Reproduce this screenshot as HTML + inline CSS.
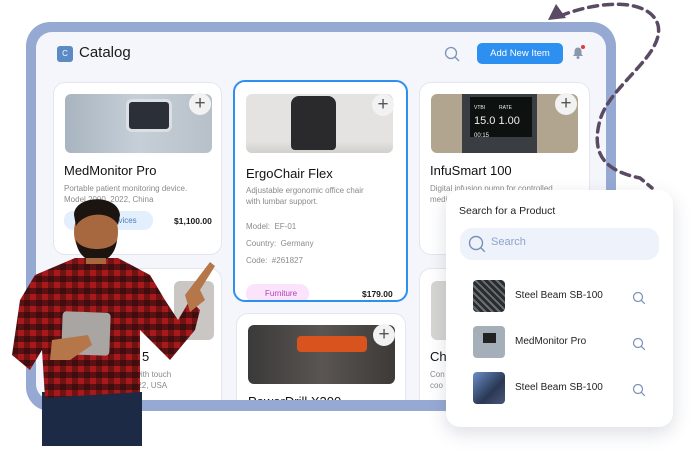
<!DOCTYPE html>
<html><head><style>
*{box-sizing:border-box;margin:0;padding:0}
body{width:699px;height:464px;background:#fff;position:relative;overflow:hidden;font-family:"Liberation Sans",sans-serif;color:#1a1a1a}
.abs{position:absolute}
.frame{left:26px;top:22px;width:590px;height:389px;background:#96a9d3;border-radius:24px}
.inner{left:36px;top:32px;width:570px;height:368px;background:#f4f6fb;border-radius:16px;overflow:hidden}
.card{position:absolute;background:#fff;border:1px solid #e3e6ee;border-radius:12px;overflow:hidden}
.img{position:absolute;border-radius:6px}
.plus{position:absolute;width:22px;height:22px;border-radius:50%;background:#f2f2f2;color:#555;font-size:19px;line-height:21px;text-align:center}
.t{position:absolute;font-size:13px;color:#111}
.d{position:absolute;font-size:8px;color:#8a8a8a;line-height:11px}
.sr{position:absolute;font-size:10px;color:#222}
</style></head><body>
<div class="abs frame"></div>
<div class="abs inner">
  <div class="abs" style="left:21px;top:14px;width:16px;height:16px;background:#5b8ac4;border-radius:3px;color:#fff;font-size:8px;text-align:center;line-height:16px">C</div>
  <div class="abs" style="left:43px;top:12px;font-size:15px">Catalog</div>
  <svg class="abs" style="left:408px;top:14px" width="16" height="16" viewBox="0 0 16 16"><circle cx="7" cy="7" r="5.5" fill="none" stroke="#7e93b8" stroke-width="1.3"/><path d="M11 11l4 4" stroke="#7e93b8" stroke-width="1.3"/></svg>
  <div class="abs" style="left:441px;top:11px;width:86px;height:21px;background:#2d8ff0;border-radius:5px;color:#fff;font-size:9.5px;text-align:center;line-height:21px">Add New Item</div>
  <svg class="abs" style="left:534px;top:12px" width="16" height="16" viewBox="0 0 16 16"><path d="M3 12h10l-1.5-2V7a3.5 3.5 0 0 0-7 0v3z" fill="#8b97ad"/><circle cx="8" cy="13.5" r="1.5" fill="#8b97ad"/><circle cx="13" cy="3" r="2" fill="#e53935"/></svg>

  <div class="card" style="left:17px;top:50px;width:169px;height:173px">
    <div class="img" style="left:11px;top:11px;width:147px;height:59px;background:linear-gradient(90deg,#a8b4bf,#c6cfd8 50%,#b7c0c8)"></div>
    <div class="img" style="left:72px;top:16px;width:46px;height:33px;background:#2b2f38;border:3px solid #dcdfe3"></div>
    <div class="plus" style="left:135px;top:10px">+</div>
    <div class="t" style="left:10px;top:80px">MedMonitor Pro</div>
    <div class="d" style="left:10px;top:100px">Portable patient monitoring device.<br>Model 2000, 2022, China</div>
    <div class="abs" style="left:10px;top:128px;width:89px;height:19px;background:#e3effd;border-radius:9px;color:#4a7ec0;font-size:8px;line-height:19px;padding-left:50px">evices</div>
    <div class="abs" style="left:120px;top:133px;font-size:8.5px;font-weight:bold">$1,100.00</div>
  </div>
  <div class="card" style="left:197px;top:48px;width:175px;height:222px;border:2px solid #2d8ff0">
    <div class="img" style="left:11px;top:12px;width:147px;height:59px;background:linear-gradient(180deg,#e4e3e1 80%,#d0cfcc)"></div>
    <div class="abs" style="left:56px;top:14px;width:45px;height:54px;background:#2a2a2c;border-radius:8px 8px 4px 4px"></div>
    <div class="plus" style="left:137px;top:12px">+</div>
    <div class="t" style="left:11px;top:84px">ErgoChair Flex</div>
    <div class="d" style="left:11px;top:103px">Adjustable ergonomic office chair<br>with lumbar support.</div>
    <div class="d" style="left:11px;top:139px">Model:&nbsp; EF-01</div>
    <div class="d" style="left:11px;top:156px">Country:&nbsp; Germany</div>
    <div class="d" style="left:11px;top:173px">Code:&nbsp; #261827</div>
    <div class="abs" style="left:11px;top:202px;width:63px;height:19px;background:#fbe3fb;border-radius:9px;color:#b040b0;font-size:8px;line-height:19px;padding-left:19px">Furniture</div>
    <div class="abs" style="left:127px;top:207px;font-size:8.5px;font-weight:bold">$179.00</div>
  </div>
  <div class="card" style="left:383px;top:50px;width:171px;height:173px">
    <div class="img" style="left:11px;top:11px;width:147px;height:59px;background:#b2a590"></div>
    <div class="abs" style="left:42px;top:11px;width:75px;height:59px;background:#3a3e42"></div>
    <div class="abs" style="left:50px;top:14px;width:62px;height:40px;background:#0d1210;color:#eee;font-size:11px;line-height:13px;padding:3px 4px"><span style="font-size:5px">VTBI&nbsp;&nbsp;&nbsp;&nbsp;&nbsp;&nbsp;&nbsp;&nbsp;&nbsp;&nbsp;RATE</span><br>15.0 1.00<br><span style="font-size:6px">00:15</span></div>
    <div class="plus" style="left:135px;top:10px">+</div>
    <div class="t" style="left:10px;top:80px">InfuSmart 100</div>
    <div class="d" style="left:10px;top:100px">Digital infusion pump for controlled<br>medication</div>
  </div>
  <div class="card" style="left:17px;top:236px;width:169px;height:150px">
    <div class="img" style="left:120px;top:12px;width:40px;height:59px;background:#c9c6c4"></div>
    <div class="t" style="left:88px;top:80px">5</div>
    <div class="d" style="left:70px;top:100px">ne with touch<br>, 2022, USA</div>
  </div>
  <div class="card" style="left:200px;top:281px;width:170px;height:100px">
    <div class="img" style="left:11px;top:11px;width:147px;height:59px;background:linear-gradient(90deg,#3a3a3a,#5a5552 50%,#3d3a38)"></div>
    <div class="abs" style="left:60px;top:22px;width:70px;height:16px;background:#d9531e;border-radius:4px"></div>
    <div class="plus" style="left:136px;top:10px">+</div>
    <div class="t" style="left:11px;top:80px">PowerDrill X200</div>
  </div>
  <div class="card" style="left:383px;top:236px;width:171px;height:150px">
    <div class="img" style="left:11px;top:12px;width:147px;height:59px;background:#d6d5d3"></div>
    <div class="t" style="left:10px;top:80px">Ch</div>
    <div class="d" style="left:10px;top:100px">Con<br>coo</div>
  </div>
</div>

<svg class="abs" style="left:0;top:0" width="699" height="464" viewBox="0 0 699 464">
  <path d="M560 16 C600 0 650 -2 658 25 C665 55 610 85 600 120 C592 150 600 170 640 178 L652 188" fill="none" stroke="#5a4a63" stroke-width="3.5" stroke-dasharray="9 6" stroke-linecap="round"/>
  <path d="M548 20 L556 4 L566 18 Z" fill="#5a4a63"/>
</svg>

<div class="abs" style="left:446px;top:190px;width:227px;height:237px;background:#fff;border-radius:14px;box-shadow:0 6px 18px rgba(60,70,100,.18)">
  <div class="abs" style="left:13px;top:15px;font-size:10.5px;color:#222">Search for a Product</div>
  <div class="abs" style="left:14px;top:38px;width:199px;height:32px;background:#eef2fa;border-radius:12px"></div>
  <svg class="abs" style="left:22px;top:45px" width="18" height="18" viewBox="0 0 18 18"><circle cx="8" cy="8" r="6.5" fill="none" stroke="#7b90b8" stroke-width="1.4"/><path d="M12.8 12.8l4 4" stroke="#7b90b8" stroke-width="1.4"/></svg>
  <div class="abs" style="left:45px;top:46px;font-size:11px;color:#8ea2c8">Search</div>
  <div class="abs" style="left:27px;top:90px;width:32px;height:32px;border-radius:4px;background:repeating-linear-gradient(45deg,#2a2d30 0 3px,#6b6f73 3px 5px)"></div>
  <div class="sr" style="left:69px;top:100px">Steel Beam SB-100</div>
  <div class="abs" style="left:27px;top:136px;width:32px;height:32px;border-radius:4px;background:#a5afba"><div class="abs" style="left:10px;top:7px;width:13px;height:10px;background:#222"></div></div>
  <div class="sr" style="left:69px;top:146px">MedMonitor Pro</div>
  <div class="abs" style="left:27px;top:182px;width:32px;height:32px;border-radius:4px;background:linear-gradient(135deg,#6b8fc8,#2a3855 60%,#4a5878)"></div>
  <div class="sr" style="left:69px;top:192px">Steel Beam SB-100</div>
  <svg class="abs" style="left:186px;top:101px" width="14" height="120" viewBox="0 0 14 120"><g fill="none" stroke="#7b90b8" stroke-width="1.2"><circle cx="6" cy="6" r="4.5"/><path d="M9.3 9.3l3.5 3.5"/><circle cx="6" cy="52" r="4.5"/><path d="M9.3 55.3l3.5 3.5"/><circle cx="6" cy="98" r="4.5"/><path d="M9.3 101.3l3.5 3.5"/></g></svg>
</div>

<svg class="abs" style="left:0;top:195px" width="230" height="255" viewBox="0 195 230 255">
  <defs><pattern id="pl" width="12" height="12" patternUnits="userSpaceOnUse"><rect width="12" height="12" fill="#a8191c"/><rect width="6" height="12" fill="#5a0f10" opacity=".7"/><rect width="12" height="6" fill="#1a0a0a" opacity=".55"/></pattern></defs>
  <path d="M42 392 L142 392 L142 446 L42 446 Z" fill="#1c2a45"/>
  <path d="M75 258 L118 258 L150 275 L165 300 L178 320 L190 300 L200 310 L195 330 L170 360 L155 345 L140 330 L140 392 L45 398 L42 350 L30 370 L12 355 L20 300 L35 275 Z" fill="url(#pl)"/>
  <path d="M185 295 L210 262 L215 266 L200 290 L205 300 L190 312 Z" fill="#b5764a"/>
  <rect x="62" y="312" width="48" height="43" rx="4" fill="#a9a5a2" transform="rotate(2 86 333)"/>
  <path d="M52 340 L88 335 L92 345 L70 360 L50 360 Z" fill="#b5764a"/>
  <ellipse cx="96" cy="232" rx="22" ry="28" fill="#a8683f"/>
  <path d="M74 215 C74 195 118 193 120 215 L118 225 C110 210 84 212 76 226 Z" fill="#1c1410"/>
  <path d="M76 240 C78 268 114 270 117 240 C112 252 82 252 76 240 Z" fill="#1c1410"/>
  <rect x="86" y="258" width="20" height="6" fill="#a8683f"/>
</svg>
</body></html>
